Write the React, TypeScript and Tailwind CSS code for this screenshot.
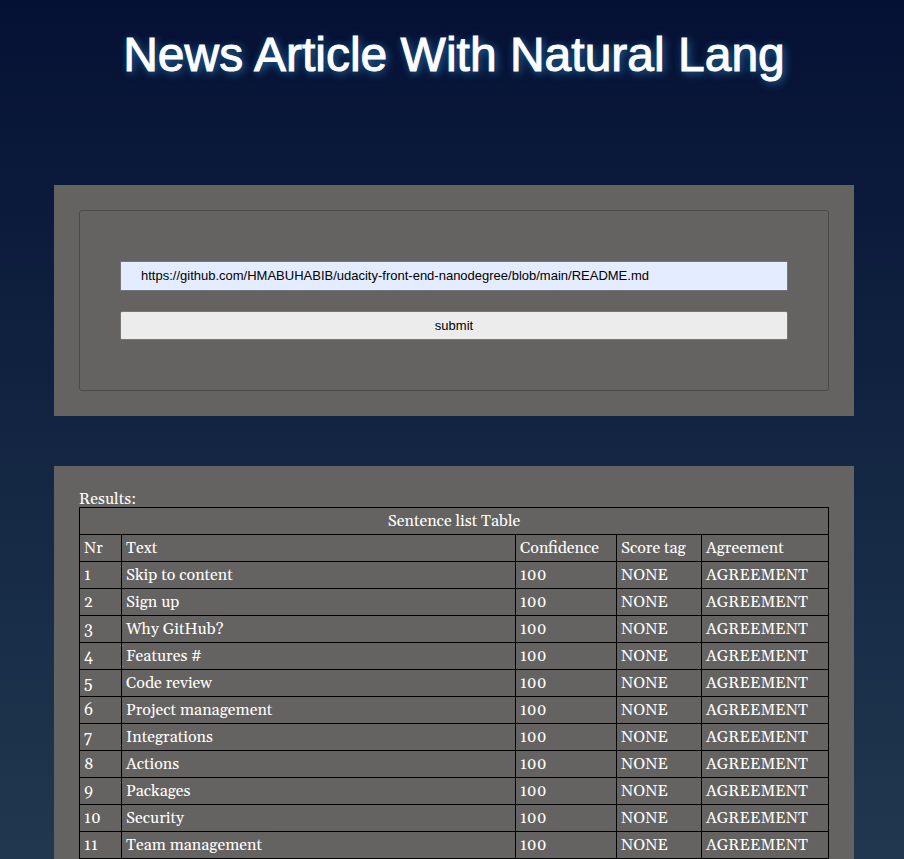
const sentences = [
  'Skip to content',
  'Sign up',
  'Why GitHub?',
  'Features #',
  'Code review',
  'Project management',
  'Integrations',
  'Actions',
  'Packages',
  'Security',
  'Team management',
];

const cell = 'border border-black px-1 text-left font-normal';

export default function App() {
  return (
    <div className="flex min-h-screen flex-col bg-linear-to-b/srgb from-[#051134] to-[#20384f] pr-[50px] pl-[54px] font-['Liberation_Sans',Arial,sans-serif]">
      <header className="pt-[27px] pb-[102px]">
        <h1 className="text-center text-5xl leading-14 font-normal text-white [-webkit-text-stroke:1px_white] [text-shadow:2px_2px_8px_#2a7ab8]">
          News Article With Natural Lang
        </h1>
      </header>

      <main className="flex grow flex-col gap-[50px]">
        <section className="bg-[#656361] p-[25px]">
          <form onSubmit={(event) => event.preventDefault()}>
            <fieldset className="flex flex-col gap-5 rounded-[3px] border border-[#4b4a48] px-10 py-[50px]">
              <input
                type="text"
                name="url"
                aria-label="Article URL"
                defaultValue="https://github.com/HMABUHABIB/udacity-front-end-nanodegree/blob/main/README.md"
                className="h-[30px] w-full border border-[#767676] bg-[#e4edff] px-5 pb-px text-[13px] text-black"
              />
              <button
                type="submit"
                className="h-[29px] w-full rounded-[2px] border border-[#767676] bg-[#ececec] text-[13px] text-black"
              >
                submit
              </button>
            </fieldset>
          </form>
        </section>

        <section className="grow bg-[#656361] px-[25px] pt-[25px] font-[Georgia,Gelasio,'Liberation_Serif',serif] text-base leading-[26px] text-white">
          <h2 className="leading-4">Results:</h2>
          <table className="w-full table-fixed border-collapse">
            <colgroup>
              <col className="w-[42px]" />
              <col />
              <col className="w-[101px]" />
              <col className="w-[85px]" />
              <col className="w-[127px]" />
            </colgroup>
            <thead>
              <tr>
                <th colSpan={5} className="border border-black font-normal">
                  Sentence list Table
                </th>
              </tr>
              <tr>
                <th className={cell}>Nr</th>
                <th className={cell}>Text</th>
                <th className={cell}>Confidence</th>
                <th className={cell}>Score tag</th>
                <th className={cell}>Agreement</th>
              </tr>
            </thead>
            <tbody>
              {sentences.map((text, index) => (
                <tr key={text}>
                  <td className={cell}>{index + 1}</td>
                  <td className={cell}>{text}</td>
                  <td className={cell}>100</td>
                  <td className={cell}>NONE</td>
                  <td className={cell}>AGREEMENT</td>
                </tr>
              ))}
            </tbody>
          </table>
        </section>
      </main>
    </div>
  );
}
